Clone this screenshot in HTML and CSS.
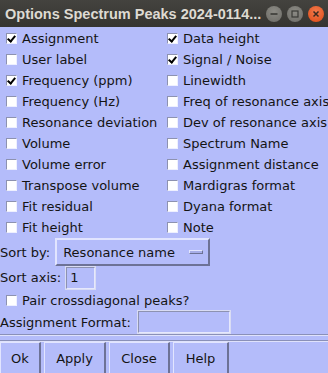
FILE: index.html
```html
<!DOCTYPE html>
<html lang="en">
<head>
<meta charset="utf-8">
<title>Options Spectrum Peaks</title>
<link rel="stylesheet" href="styles.css">
</head>
<body>

<div class="titlebar">
  <span class="title">Options Spectrum Peaks 2024-0114...</span>
  <span class="winbtn min"><svg width="10" height="10" viewBox="0 0 10 10"><path d="M1.5 5h7" stroke="#3a3a36" stroke-width="1.6"/></svg></span>
  <span class="winbtn max"><svg width="10" height="10" viewBox="0 0 10 10"><rect x="2" y="2" width="6" height="6" fill="none" stroke="#3a3a36" stroke-width="1.2"/></svg></span>
  <span class="winbtn close"><svg width="10" height="10" viewBox="0 0 10 10"><path d="M2.5 2.5l5 5M7.5 2.5l-5 5" stroke="#3a2a20" stroke-width="1.5"/></svg></span>
</div>

<div class="main">
  <div class="checks">
    <label class="chk"><span class="box on"></span>Assignment</label>
    <label class="chk"><span class="box on"></span>Data height</label>
    <label class="chk"><span class="box"></span>User label</label>
    <label class="chk"><span class="box on"></span>Signal / Noise</label>
    <label class="chk"><span class="box on"></span>Frequency (ppm)</label>
    <label class="chk"><span class="box"></span>Linewidth</label>
    <label class="chk"><span class="box"></span>Frequency (Hz)</label>
    <label class="chk"><span class="box"></span>Freq of resonance axis</label>
    <label class="chk"><span class="box"></span>Resonance deviation</label>
    <label class="chk"><span class="box"></span>Dev of resonance axis</label>
    <label class="chk"><span class="box"></span>Volume</label>
    <label class="chk"><span class="box"></span>Spectrum Name</label>
    <label class="chk"><span class="box"></span>Volume error</label>
    <label class="chk"><span class="box"></span>Assignment distance</label>
    <label class="chk"><span class="box"></span>Transpose volume</label>
    <label class="chk"><span class="box"></span>Mardigras format</label>
    <label class="chk"><span class="box"></span>Fit residual</label>
    <label class="chk"><span class="box"></span>Dyana format</label>
    <label class="chk"><span class="box"></span>Fit height</label>
    <label class="chk"><span class="box"></span>Note</label>
  </div>

  <div class="row sort-row">
    <span class="lbl">Sort by:</span>
    <span class="menubtn">Resonance name<span class="indicator"></span></span>
  </div>
  <div class="row axis-row">
    <span class="lbl">Sort axis:</span>
    <span class="entry axis">1</span>
  </div>
  <div class="row pair-row">
    <label class="chk"><span class="box"></span>Pair crossdiagonal peaks?</label>
  </div>
  <div class="row format-row">
    <span class="lbl">Assignment Format:</span>
    <span class="entry format"></span>
  </div>
</div>

<div class="buttons">
  <span class="btn">Ok</span>
  <span class="btn">Apply</span>
  <span class="btn">Close</span>
  <span class="btn">Help</span>
</div>

</body>
</html>
```

FILE: styles.css
```css
body {
  margin: 0;
  width: 328px;
  height: 373px;
  overflow: hidden;
  background: #b4bcfa;
  font-family: "DejaVu Sans", sans-serif;
  font-size: 13px;
  color: #141414;
}

.titlebar {
  height: 27px;
  background: linear-gradient(#44433f, #353430);
  display: flex;
  align-items: center;
  padding-left: 5px;
}
.title {
  flex: 1;
  color: #dedad2;
  font-family: "Liberation Sans", sans-serif;
  font-weight: bold;
  font-size: 14.5px;
  white-space: nowrap;
}
.winbtn {
  width: 16px;
  height: 16px;
  border-radius: 50%;
  margin-right: 5px;
  display: flex;
  align-items: center;
  justify-content: center;
  background: radial-gradient(circle at 50% 35%, #8c8b85, #6c6b66);
}
.winbtn.close {
  background: radial-gradient(circle at 50% 35%, #f27a4c, #de4a16);
  margin-right: 4px;
}

.main {
  padding-top: 1px;
  height: 306px;
  border-bottom: 1px solid #8a90b8;
  box-shadow: 0 1px 0 #dfe2fc;
}

.checks {
  display: grid;
  grid-template-columns: 160px 1fr;
  grid-auto-rows: 21px;
}
.chk {
  display: flex;
  align-items: center;
  padding-left: 6px;
  white-space: nowrap;
}
.checks .chk:nth-child(even) { padding-left: 7px; }
.box {
  width: 9px;
  height: 9px;
  background: #fff;
  border: 1px solid #8d92b0;
  border-right-color: #eef0ff;
  border-bottom-color: #eef0ff;
  margin-right: 5px;
  position: relative;
}
.box.on::after {
  content: "";
  position: absolute;
  left: 2px;
  top: 0px;
  width: 3px;
  height: 6px;
  border-right: 2px solid #000;
  border-bottom: 2px solid #000;
  transform: rotate(40deg);
}

.row {
  display: flex;
  align-items: center;
}
.lbl { white-space: nowrap; }
.sort-row { height: 28px; }
.menubtn {
  margin-left: 5px;
  width: 145px;
  height: 24px;
  padding-left: 6px;
  display: flex;
  align-items: center;
  border: 2px solid #e2e5ff;
  border-right-color: #6d7296;
  border-bottom-color: #6d7296;
}
.indicator {
  margin-left: auto;
  margin-right: 5px;
  width: 12px;
  height: 2px;
  border: 1px solid #e2e5ff;
  border-right-color: #6d7296;
  border-bottom-color: #6d7296;
  background: #a7aee8;
}
.axis-row { height: 23px; }
.entry {
  height: 20px;
  border: 1px solid #8d92b0;
  border-right-color: #e6e8fc;
  border-bottom-color: #e6e8fc;
  box-shadow: 0 0 0 1px #d9dcf4;
  display: flex;
  align-items: center;
  padding-left: 3px;
}
.axis { width: 24px; margin-left: 5px; }
.pair-row { height: 22px; }
.format-row { height: 22px; }
.format { width: 87px; margin-left: 7px; }

.buttons {
  margin-top: 5px;
  border-top: 1px solid #8a90b8;
  box-shadow: inset 0 1px 0 #dfe2fc;
  padding-top: 1px;
  display: flex;
  gap: 3px;
}
.btn {
  height: 30px;
  display: flex;
  align-items: center;
  justify-content: center;
  border: 1px solid #e2e5ff;
  border-right-color: #6d7296;
  border-bottom-color: #6d7296;
  border-right-width: 2px;
}
.btn:nth-child(1) { width: 38px; }
.btn:nth-child(2) { width: 59px; }
.btn:nth-child(3) { width: 58px; }
.btn:nth-child(4) { width: 53px; }
```
